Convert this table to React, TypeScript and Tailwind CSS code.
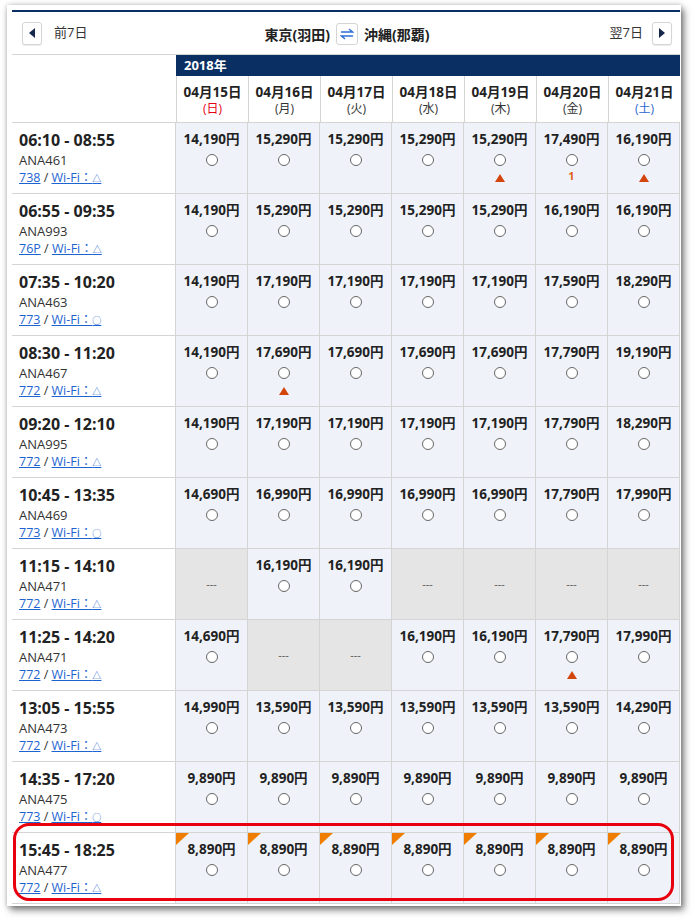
import clsx from "clsx";

type Flight = {
  time: string;
  no: string;
  craft: string;
  wifi: string;
  prices: (string | null)[];
  marks?: Record<number, string>;
  corner?: boolean;
};

const FLIGHTS: Flight[] = [
  { time: "06:10 - 08:55", no: "ANA461", craft: "738", wifi: "△", prices: ["14,190", "15,290", "15,290", "15,290", "15,290", "17,490", "16,190"], marks: { 4: "tri", 5: "1", 6: "tri" } },
  { time: "06:55 - 09:35", no: "ANA993", craft: "76P", wifi: "△", prices: ["14,190", "15,290", "15,290", "15,290", "15,290", "16,190", "16,190"] },
  { time: "07:35 - 10:20", no: "ANA463", craft: "773", wifi: "○", prices: ["14,190", "17,190", "17,190", "17,190", "17,190", "17,590", "18,290"] },
  { time: "08:30 - 11:20", no: "ANA467", craft: "772", wifi: "△", prices: ["14,190", "17,690", "17,690", "17,690", "17,690", "17,790", "19,190"], marks: { 1: "tri" } },
  { time: "09:20 - 12:10", no: "ANA995", craft: "772", wifi: "△", prices: ["14,190", "17,190", "17,190", "17,190", "17,190", "17,790", "18,290"] },
  { time: "10:45 - 13:35", no: "ANA469", craft: "773", wifi: "○", prices: ["14,690", "16,990", "16,990", "16,990", "16,990", "17,790", "17,990"] },
  { time: "11:15 - 14:10", no: "ANA471", craft: "772", wifi: "△", prices: [null, "16,190", "16,190", null, null, null, null] },
  { time: "11:25 - 14:20", no: "ANA471", craft: "772", wifi: "△", prices: ["14,690", null, null, "16,190", "16,190", "17,790", "17,990"], marks: { 5: "tri" } },
  { time: "13:05 - 15:55", no: "ANA473", craft: "772", wifi: "△", prices: ["14,990", "13,590", "13,590", "13,590", "13,590", "13,590", "14,290"] },
  { time: "14:35 - 17:20", no: "ANA475", craft: "773", wifi: "○", prices: ["9,890", "9,890", "9,890", "9,890", "9,890", "9,890", "9,890"] },
  { time: "15:45 - 18:25", no: "ANA477", craft: "772", wifi: "△", prices: ["8,890", "8,890", "8,890", "8,890", "8,890", "8,890", "8,890"], corner: true },
];

const DAYS = [
  { d: "04月15日", w: "(日)", c: "text-[#e60012]" },
  { d: "04月16日", w: "(月)", c: "text-[#333]" },
  { d: "04月17日", w: "(火)", c: "text-[#333]" },
  { d: "04月18日", w: "(水)", c: "text-[#333]" },
  { d: "04月19日", w: "(木)", c: "text-[#333]" },
  { d: "04月20日", w: "(金)", c: "text-[#333]" },
  { d: "04月21日", w: "(土)", c: "text-[#2b68d0]" },
];

const COLS = "grid grid-cols-[164px_repeat(7,72px)]";

function Arrow({ dir }: { dir: "left" | "right" }) {
  return (
    <button className="flex h-[23px] w-[20px] items-center justify-center rounded-[3px] border border-[#d5d5d5] bg-white shadow-[0_1px_1px_rgba(0,0,0,0.08)]">
      <svg width="6" height="10" viewBox="0 0 6 10">
        {dir === "left" ? (
          <polygon points="6,0 6,10 0,5" fill="#15284b" />
        ) : (
          <polygon points="0,0 0,10 6,5" fill="#15284b" />
        )}
      </svg>
    </button>
  );
}

function PriceCell({
  price,
  mark,
  corner,
}: {
  price: string | null;
  mark?: string;
  corner?: boolean;
}) {
  if (!price) {
    return (
      <div className="flex h-[71px] items-center justify-center border-b border-r border-[#d4d4d4] bg-[#e5e5e5] text-[11px] text-[#555]">
        ---
      </div>
    );
  }
  return (
    <div className="relative flex h-[71px] flex-col items-center border-b border-r border-[#d4d4d4] bg-[#eff3f9] pt-[8px]">
      {corner && (
        <svg className="absolute left-0 top-0" width="13" height="12" viewBox="0 0 13 12">
          <polygon points="0,0 13,0 0,12" fill="#ef7d00" />
        </svg>
      )}
      <div className="text-[13.5px] font-bold leading-[17px] text-[#222]">
        {price}円
      </div>
      <span className="mt-[6px] block h-[12px] w-[12px] rounded-full border border-[#666] bg-white" />
      {mark === "tri" && (
        <svg className="mt-[8px]" width="10" height="8" viewBox="0 0 10 8">
          <polygon points="5,0 10,8 0,8" fill="#d2460c" />
        </svg>
      )}
      {mark && mark !== "tri" && (
        <div className="mt-[3px] text-[11px] font-bold leading-[14px] text-[#e0601a]">
          {mark}
        </div>
      )}
    </div>
  );
}

function FlightRow({ f }: { f: Flight }) {
  return (
    <div className={clsx(COLS, "relative")}>
      <div className="h-[71px] border-b border-r border-[#d4d4d4] bg-white pl-[7px] pt-[6px]">
        <div className="text-[16px] font-bold leading-[22px] text-[#222]">{f.time}</div>
        <div className="text-[13px] leading-[18px] text-[#333]">{f.no}</div>
        <div className="text-[12.5px] leading-[17px] text-[#333]">
          <a className="text-[#1d64d0] underline">{f.craft}</a>
          {" / "}
          <a className="text-[#1d64d0] underline">
            Wi-Fi：<span className="text-[9px]">{f.wifi}</span>
          </a>
        </div>
      </div>
      {f.prices.map((p, i) => (
        <PriceCell key={i} price={p} mark={f.marks?.[i]} corner={f.corner} />
      ))}
      {f.corner && (
        <div className="pointer-events-none absolute left-[1px] top-[-10px] h-[78px] w-[661px] rounded-[16px] border-[3px] border-[#e8000f]" />
      )}
    </div>
  );
}

export default function App() {
  return (
    <div className="min-h-[920px] bg-white pl-[7px] pt-[5px] font-['Open_Sans','Noto_Sans_CJK_JP',sans-serif]">
      <div className="w-[674px] bg-white pb-[2px] pl-[5px] pr-[1px] pt-[5px] shadow-[0_0_5px_rgba(0,0,0,0.22),3px_4px_7px_rgba(0,0,0,0.5)]">
        <div className="border-t-2 border-[#0a2f62]">
          <div className="grid h-[43px] grid-cols-[1fr_auto_1fr] items-center border-b border-[#d4d4d4] px-[10px] pr-[8px]">
            <div className="flex items-center gap-[12px]">
              <Arrow dir="left" />
              <span className="text-[13px] text-[#333]">前7日</span>
            </div>
            <div className="flex items-center gap-[6px] pt-[2px]">
              <span className="text-[14px] font-bold text-[#222]">東京(羽田)</span>
              <button className="flex h-[22px] w-[22px] items-center justify-center rounded-[3px] border border-[#d5d5d5] bg-white">
                <svg width="14" height="12" viewBox="0 0 14 12" fill="none" stroke="#2b6fd6" strokeWidth="1.5" strokeLinecap="round">
                  <path d="M1.5 4 H12.5 L9.5 1.5" />
                  <path d="M12.5 8 H1.5 L4.5 10.5" />
                </svg>
              </button>
              <span className="text-[14px] font-bold text-[#222]">沖縄(那覇)</span>
            </div>
            <div className="flex items-center justify-end gap-[9px]">
              <span className="text-[13px] text-[#333]">翌7日</span>
              <Arrow dir="right" />
            </div>
          </div>

          <div className={clsx(COLS, "grid-rows-[21px_47px]")}>
            <div className="row-span-2 border-b border-[#d4d4d4] bg-white" />
            <div className="col-span-7 flex items-center bg-[#0a2f62] pl-[8px] text-[13px] font-bold text-white">
              2018年
            </div>
            {DAYS.map((d) => (
              <div
                key={d.d}
                className="flex flex-col items-center border-b border-l border-[#d4d4d4] pt-[8px]"
              >
                <div className="text-[13.5px] font-bold leading-[17px] text-[#222]">{d.d}</div>
                <div className={clsx("text-[12px] leading-[16px]", d.c)}>{d.w}</div>
              </div>
            ))}
          </div>

          {FLIGHTS.map((f, i) => (
            <FlightRow key={i} f={f} />
          ))}
        </div>
      </div>
    </div>
  );
}
